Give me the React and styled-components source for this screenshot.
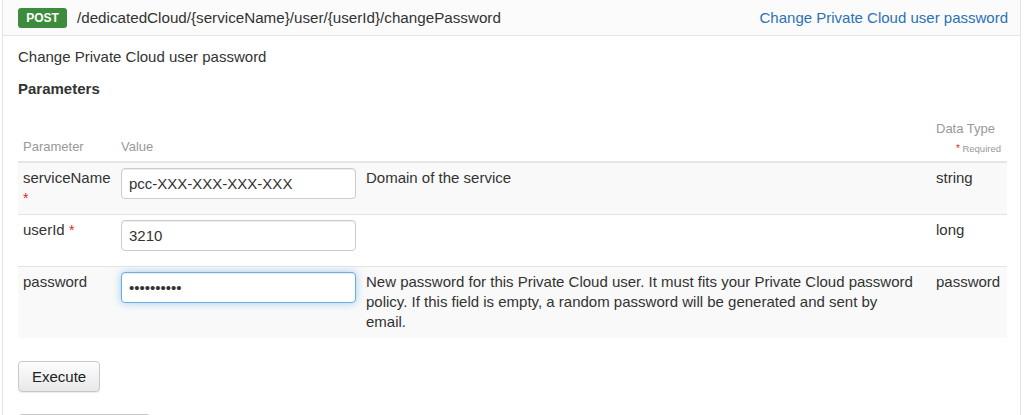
import React from 'react';
import styled, { createGlobalStyle } from 'styled-components';

const Global = createGlobalStyle`
  body {
    margin: 0;
    background: #fff;
    font-family: "Liberation Sans", Arial, sans-serif;
    color: #333;
  }
`;

const Operation = styled.div`
  margin-left: 2px;
  width: 1019px;
  box-sizing: border-box;
  border: 1px solid #e3e3e3;
  border-top: none;
`;

const Heading = styled.div`
  display: flex;
  align-items: center;
  height: 36px;
  box-sizing: border-box;
  padding: 0 12px 0 15px;
  background: #fbfbfb;
  border-bottom: 1px solid #e5e5e5;
`;

const Method = styled.span`
  display: inline-block;
  box-sizing: border-box;
  width: 49px;
  height: 20px;
  background: #3d8c3d;
  color: #fff;
  font-size: 12px;
  font-weight: bold;
  text-align: center;
  line-height: 20px;
  border-radius: 3px;
  margin-right: 10px;
`;

const Path = styled.span`
  font-size: 15.2px;
  color: #333;
  flex: 1;
`;

const Summary = styled.a`
  font-size: 15px;
  color: #2a72b5;
  text-decoration: none;
`;

const Content = styled.div`
  padding: 10px 15px 0;
`;

const Description = styled.p`
  margin: 0 0 11px;
  font-size: 15px;
  line-height: 21px;
`;

const SectionTitle = styled.h4`
  margin: 0;
  font-size: 15px;
  font-weight: bold;
  line-height: 21px;
`;

const Table = styled.table`
  width: 989px;
  margin-top: 21px;
  border-collapse: collapse;
  table-layout: fixed;
  font-size: 15px;
`;

const Th = styled.th`
  text-align: ${p => (p.$right ? 'right' : 'left')};
  vertical-align: bottom;
  white-space: nowrap;
  font-weight: normal;
  font-size: 13px;
  line-height: 18px;
  color: #999;
  padding: 0 ${p => (p.$right ? '14px' : '5px')} 5px 5px;
  border-bottom: 2px solid #e5e5e5;
  width: ${p => p.$w || 'auto'};
`;

const Required = styled.div`
  font-size: 9.5px;
  margin-top: 4px;
  margin-right: -8px;
  line-height: 14px;
`;

const Star = styled.span`
  color: #e0262a;
  font-size: ${p => (p.$big ? '14px' : '10px')};
`;

const Row = styled.tr`
  background: ${p => (p.$striped ? '#f9f9f9' : '#fff')};
  border-top: 1px solid #e3e3e3;
`;

const Td = styled.td`
  vertical-align: top;
  padding: 5px ${p => p.$pr || '6px'} 6px 5px;
  line-height: 20px;
  color: #333;
`;

const Input = styled.input`
  display: block;
  box-sizing: border-box;
  width: 235px;
  height: 31px;
  margin-bottom: 9px;
  padding: 4px 7px;
  font-family: "Liberation Sans", Arial, sans-serif;
  font-size: 15px;
  color: #333;
  background: #fff;
  border: 1px solid ${p => (p.$focus ? '#66afe9' : '#ccc')};
  border-radius: 4px;
  box-shadow: ${p =>
    p.$focus
      ? 'inset 0 1px 1px rgba(0,0,0,.075), 0 0 8px rgba(102,175,233,.6)'
      : 'inset 0 1px 1px rgba(0,0,0,.075)'};
  outline: none;
`;

const Button = styled.button`
  display: block;
  box-sizing: border-box;
  margin-top: ${p => p.$mt || '23px'};
  height: 31px;
  padding: 0 13px;
  font-family: "Liberation Sans", Arial, sans-serif;
  font-size: 15px;
  color: #222;
  background: linear-gradient(#fdfdfd, #e8e8e8);
  border: 1px solid #c8c8c8;
  border-radius: 4px;
  box-shadow: 0 1px 1px rgba(0, 0, 0, 0.08);
  width: ${p => p.$w || 'auto'};
`;

const params = [
  {
    name: 'serviceName',
    wrapStar: true,
    value: 'pcc-XXX-XXX-XXX-XXX',
    desc: 'Domain of the service',
    type: 'string',
  },
  { name: 'userId', value: '3210', desc: '', type: 'long' },
  {
    name: 'password',
    optional: true,
    secret: true,
    value: 'xxxxxxxxxx',
    desc:
      'New password for this Private Cloud user. It must fits your Private Cloud password policy. If this field is empty, a random password will be generated and sent by email.',
    type: 'password',
  },
];

export default function App() {
  return (
    <>
      <Global />
      <Operation>
        <Heading>
          <Method>POST</Method>
          <Path>/dedicatedCloud/{'{serviceName}'}/user/{'{userId}'}/changePassword</Path>
          <Summary href="#">Change Private Cloud user password</Summary>
        </Heading>
        <Content>
          <Description>Change Private Cloud user password</Description>
          <SectionTitle>Parameters</SectionTitle>
          <Table>
            <thead>
              <tr>
                <Th $w="88px">Parameter</Th>
                <Th $w="235px">Value</Th>
                <Th />
                <Th $right $w="57px">
                  Data Type
                  <Required>
                    <Star>*</Star> Required
                  </Required>
                </Th>
              </tr>
            </thead>
            <tbody>
              {params.map((p, i) => (
                <Row key={p.name} $striped={i % 2 === 0}>
                  <Td>
                    {p.name}
                    {!p.optional &&
                      (p.wrapStar ? (
                        <div>
                          <Star $big>*</Star>
                        </div>
                      ) : (
                        <>
                          {' '}
                          <Star $big>*</Star>
                        </>
                      ))}
                  </Td>
                  <Td>
                    <Input
                      type={p.secret ? 'password' : 'text'}
                      defaultValue={p.value}
                      $focus={p.secret}
                    />
                  </Td>
                  <Td $pr="13px">{p.desc}</Td>
                  <Td>{p.type}</Td>
                </Row>
              ))}
            </tbody>
          </Table>
          <Button $mt="23px">Execute</Button>
          <Button $w="133px" $mt="22px">Hide Response</Button>
        </Content>
      </Operation>
    </>
  );
}
